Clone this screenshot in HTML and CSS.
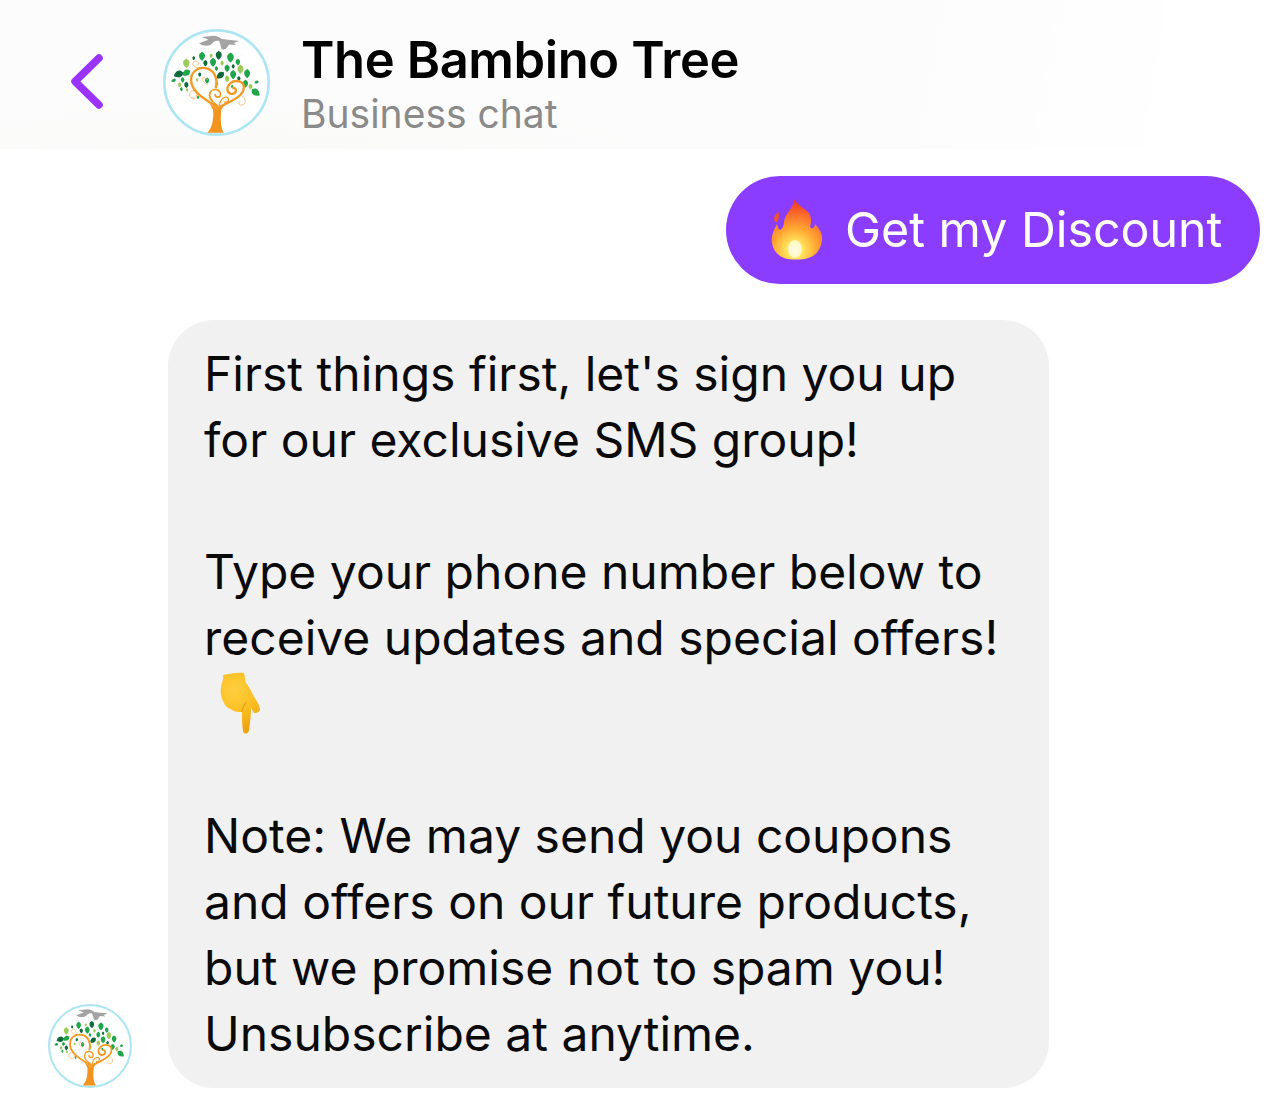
FILE: index.html
```html
<!DOCTYPE html>
<html lang="en">
<head>
  <meta charset="UTF-8" />
  <title>The Bambino Tree</title>
  <link rel="stylesheet" href="styles.css">
</head>
<body>
  <!-- shared logo, used in the header and next to the message -->
  <svg class="defs" width="0" height="0" aria-hidden="true">
    <defs>
      <path id="leaf" d="M0 14C-10 7-11-3-7-8-4-11-1-11 0-14 1-11 6-10 7-7 11-1 8 8 0 14Z" />
      <symbol id="logo" viewBox="488 88 320 320">
        <circle cx="648" cy="248" r="156" fill="#fff" stroke="#aee5f3" stroke-width="8" />
        <path fill="#a3a3a3" d="M596 132C606 124 616 124 624 120L604 112 640 108C650 108 656 112 664 118L716 124 700 130 706 136 686 134 676 148 664 150 656 124C648 122 642 124 636 130 630 140 610 140 596 132Z" />
        <g fill="#1fa64a">
          <use href="#leaf" transform="translate(605 169)" />
          <use href="#leaf" transform="translate(690 173) scale(1.1)" />
          <use href="#leaf" transform="translate(712 187) scale(.75)" />
          <use href="#leaf" transform="translate(638 187)" />
          <use href="#leaf" transform="translate(680 205) scale(.85)" />
          <use href="#leaf" transform="translate(740 221)" />
          <use href="#leaf" transform="translate(558 219) rotate(60)" />
          <use href="#leaf" transform="translate(547 240) scale(.6)" />
          <use href="#leaf" transform="translate(620 242) scale(.7)" />
          <use href="#leaf" transform="translate(698 224)" />
          <use href="#leaf" transform="translate(735 251) scale(.85)" />
          <use href="#leaf" transform="translate(765 277) rotate(-50) scale(1.1)" />
          <use href="#leaf" transform="translate(648 206) scale(.55)" />
          <use href="#leaf" transform="translate(543 268) scale(.45)" />
          <use href="#leaf" transform="translate(768 247) rotate(70) scale(.5)" />
          <use href="#leaf" transform="translate(593 292) scale(.4)" />
          <use href="#leaf" transform="translate(695 260) scale(.4)" />
          <use href="#leaf" transform="translate(520 242) rotate(70) scale(.55)" />
        </g>
        <g fill="#0f6b3c">
          <use href="#leaf" transform="translate(655 166)" />
          <use href="#leaf" transform="translate(615 190) scale(.7)" />
          <use href="#leaf" transform="translate(580 175) scale(.45)" />
          <use href="#leaf" transform="translate(535 223) rotate(70) scale(1.1)" />
          <use href="#leaf" transform="translate(558 255) scale(.7)" />
          <use href="#leaf" transform="translate(598 224) scale(.5)" />
          <use href="#leaf" transform="translate(660 226) rotate(50) scale(1)" />
          <use href="#leaf" transform="translate(698 200) scale(.5)" />
          <use href="#leaf" transform="translate(715 236) scale(.55)" />
        </g>
        <g fill="#9ccb5a">
          <use href="#leaf" transform="translate(558 190) scale(1.05)" />
          <use href="#leaf" transform="translate(632 168) scale(.5)" />
          <use href="#leaf" transform="translate(665 190) scale(.55)" />
          <use href="#leaf" transform="translate(720 208)" />
          <use href="#leaf" transform="translate(538 255) scale(.55)" />
          <use href="#leaf" transform="translate(560 270) scale(.4)" />
          <use href="#leaf" transform="translate(680 237) scale(.75)" />
          <use href="#leaf" transform="translate(750 260) scale(.65)" />
          <use href="#leaf" transform="translate(650 252) scale(.45)" />
          <use href="#leaf" transform="translate(590 240) scale(.4)" />
        </g>
        <g fill="none" stroke="#f0b46a" stroke-width="2.5">
          <path d="M600 205C575 205 572 185 586 184 598 186 596 198 588 196" />
          <path d="M590 272C570 268 562 284 572 293 584 300 594 290 586 282" />
          <path d="M725 288C738 300 736 312 724 316 714 316 712 306 720 304" />
          <path d="M622 240C596 220 604 250 622 254" />
        </g>
        <g fill="none" stroke="#f39a24" stroke-linecap="round">
          <path stroke-width="7" d="M650 322C610 296 572 276 572 240 572 214 596 200 618 206 642 212 652 236 646 262" />
          <path stroke-width="7" d="M656 322C690 304 730 290 730 262 730 244 704 238 690 250 674 264 680 284 696 282 708 280 710 264 698 264" />
          <path stroke-width="5" d="M652 318C634 306 622 290 630 276 638 264 660 268 660 284 660 294 644 294 644 284" />
          <path stroke-width="4" d="M656 318C658 304 666 290 678 292 688 296 684 310 672 306" />
        </g>
        <path fill="#f3941f" d="M620 398C634 386 640 360 638 330L628 312 650 326 676 308 662 330C660 360 660 384 670 398Z" />
      </symbol>
    </defs>
  </svg>

  <header class="chat-header">
    <a class="back" href="#" aria-label="Back">
      <svg width="36" height="60" viewBox="0 0 36 60">
        <path d="M30 6 6 29.5 30 53" fill="none" stroke="#9b33ff" stroke-width="7.5" stroke-linecap="round" stroke-linejoin="round" />
      </svg>
    </a>
    <svg class="avatar-large"><use href="#logo" /></svg>
    <div class="title-block">
      <h1>The Bambino Tree</h1>
      <p>Business chat</p>
    </div>
  </header>

  <main class="chat">
    <div class="row-out">
      <div class="bubble-out">
        <svg class="flame" width="52" height="62" viewBox="0 0 52 62" aria-label="fire">
          <defs>
            <radialGradient id="flameFill" gradientUnits="userSpaceOnUse" cx="24" cy="52" r="48">
              <stop offset="0" stop-color="#fffde8" />
              <stop offset=".16" stop-color="#ffe75f" />
              <stop offset=".45" stop-color="#ffa733" />
              <stop offset=".8" stop-color="#f8622a" />
              <stop offset="1" stop-color="#ee3d1c" />
            </radialGradient>
          </defs>
          <path fill="url(#flameFill)" d="M23 0C24 6 34 10 38 15 41 20 40 26 39 29 41 31 43 31 44 26 49 31 52 37 51 42 50 50 46 58 37 60 33 62 18 62 13 60 6 57 2 52 1 45 0 38 3 31 6 26 7 29 7 31 9 32 11 31 13 28 13 24 14 17 18 14 20 10 22 7 24 4 23 0Z" />
          <path fill="#f4541f" d="M4 24C2 20 4 16 8 14 7 17 9 20 6 24Z" />
          <ellipse cx="24" cy="51" rx="7" ry="9" fill="#fffbe0" opacity=".8" />
        </svg>
        <span>Get my Discount</span>
      </div>
    </div>

    <div class="row-in">
      <svg class="avatar-small"><use href="#logo" /></svg>
      <div class="bubble-in">
        First things first, let's sign you up<br>
        for our exclusive SMS group!<br>
        <br>
        Type your phone number below to<br>
        receive updates and special offers!<br>
        <svg class="finger" width="44" height="64" viewBox="0 0 44 64" aria-label="pointing down">
          <defs>
            <radialGradient id="fingerFill" gradientUnits="userSpaceOnUse" cx="16" cy="18" r="40">
              <stop offset="0" stop-color="#ffcf40" />
              <stop offset=".55" stop-color="#fabf22" />
              <stop offset="1" stop-color="#efa30f" />
            </radialGradient>
          </defs>
          <path fill="url(#fingerFill)" d="M5 3C11 2 20 0 26 1 27 5 27 9 28 11 31 15 33 18 34 21 37 27 42 33 42 38 40 41 38 41 36 41 35 39 34 37 33 36 33 43 32 52 31 58 31 62 26 63 25 59 24 52 24 46 24 40 21 40 17 40 14 38 10 36 7 34 6 31 3 26 2 20 3 16 3 12 6 8 5 3Z" />
          <path fill="none" stroke="#e9a00f" stroke-width="1.2" d="M24 40C24 36 26 33 28 30" />
        </svg><br>
        <br>
        Note: We may send you coupons<br>
        and offers on our future products,<br>
        but we promise not to spam you!<br>
        Unsubscribe at anytime.
      </div>
    </div>
  </main>
</body>
</html>
```

FILE: styles.css
```css
* {
  box-sizing: border-box;
}
html, body {
  margin: 0;
  height: 100%;
  overflow: hidden;
}
body {
  background: white;
  font-family: Inter, "Liberation Sans", sans-serif;
  color: #0a0a0a;
}
.defs {
  position: absolute;
}
.chat-header {
  display: flex;
  align-items: center;
  width: 1163px;
  height: 149px;
  padding: 15px 0 0 69px;
  background:
    linear-gradient(100deg, rgba(255,255,255,0) 75%, rgba(255,255,255,.9) 100%),
    radial-gradient(ellipse 500px 60px at 250px 149px, #fafaf9, rgba(250,250,249,0)),
    #fcfcfc;
}
.back {
  display: flex;
  width: 36px;
}
.avatar-large {
  width: 107px;
  height: 107px;
  margin-left: 58px;
}
.title-block {
  margin-left: 31px;
  margin-top: 6px;
}
.title-block h1 {
  margin: 0;
  font-size: 50.7px;
  font-weight: 600;
  line-height: 56px;
  color: #000;
  letter-spacing: -0.4px;
}
.title-block p {
  margin: 1px 0 0;
  font-size: 39px;
  line-height: 50px;
  color: #8a8a8a;
}
.chat {
  display: flex;
  flex-direction: column;
}
.row-out {
  display: flex;
  justify-content: flex-end;
  margin-top: 27px;
  padding-right: 24px;
}
.bubble-out {
  display: flex;
  align-items: center;
  gap: 22px;
  width: 534px;
  height: 108px;
  padding: 0 0 2px 45px;
  border-radius: 54px;
  background: #8b3dff;
  color: white;
  font-size: 48.3px;
}
.row-in {
  display: flex;
  align-items: flex-end;
  gap: 36px;
  margin-top: 36px;
  padding-left: 48px;
}
.avatar-small {
  width: 84px;
  height: 84px;
}
.bubble-in {
  width: 881px;
  height: 768px;
  padding: 21px 36px;
  border-radius: 46px;
  background: #f1f1f1;
  font-size: 48px;
  line-height: 66px;
}
.finger {
  margin: 0 0 -15px 14px;
}
```
